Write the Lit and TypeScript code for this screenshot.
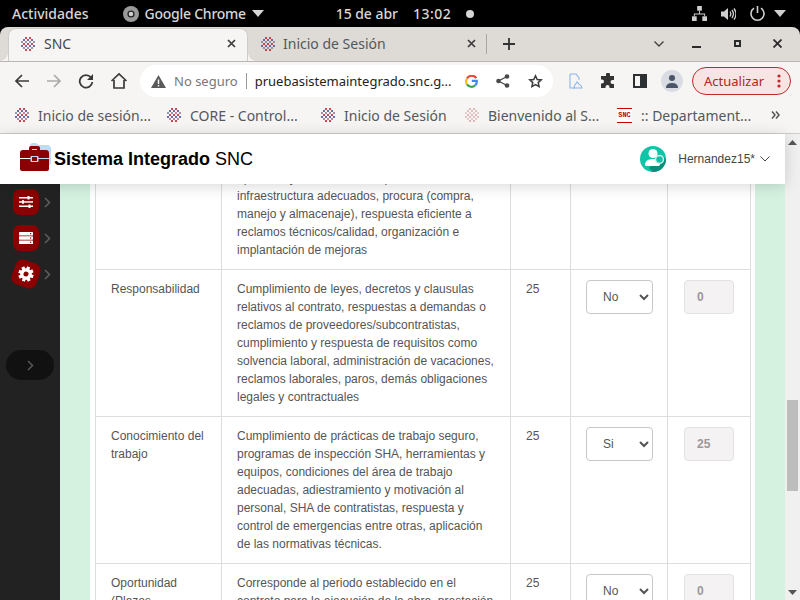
import { LitElement, css, html, svg } from "lit";
import { customElement } from "lit/decorators.js";

interface Row {
  name: string[];
  text: string[];
  answer: string;
  score: string;
}

const rows: Row[] = [
  {
    name: ["Responsabilidad"],
    text: [
      "Cumplimiento de leyes, decretos y clausulas",
      "relativos al contrato, respuestas a demandas o",
      "reclamos de proveedores/subcontratistas,",
      "cumplimiento y respuesta de requisitos como",
      "solvencia laboral, administración de vacaciones,",
      "reclamos laborales, paros, demás obligaciones",
      "legales y contractuales",
    ],
    answer: "No",
    score: "0",
  },
  {
    name: ["Conocimiento del", "trabajo"],
    text: [
      "Cumplimiento de prácticas de trabajo seguro,",
      "programas de inspección SHA, herramientas y",
      "equipos, condiciones del área de trabajo",
      "adecuadas, adiestramiento y motivación al",
      "personal, SHA de contratistas, respuesta y",
      "control de emergencias entre otras, aplicación",
      "de las normativas técnicas.",
    ],
    answer: "Si",
    score: "25",
  },
  {
    name: ["Oportunidad", "(Plazos"],
    text: [
      "Corresponde al periodo establecido en el",
      "contrato para la ejecución de la obra, prestación",
    ],
    answer: "No",
    score: "0",
  },
];

const favicon = (size = 16, pale = false) => {
  const dots: [number, number, string][] = [];
  const colours = pale
    ? ["#dfa8a8", "#d4b8b8", "#e0c4c4"]
    : ["#c0202e", "#4a4f96", "#8a7d9c"];
  for (let i = 0; i < 7; i++) {
    for (let j = 0; j < 7; j++) {
      if (Math.abs(i - 3) + Math.abs(j - 3) > 4 || (i + j) % 2) continue;
      dots.push([i * 2 + 2, j * 2 + 2, colours[(i * 3 + j) % 3]]);
    }
  }
  return html`<svg class="fav" width=${size} height=${size} viewBox="0 0 16 16">
    ${dots.map(([x, y, c]) => svg`<rect x=${x - 0.9} y=${y - 0.9} width="1.800" height="1.800" fill=${c}></rect>`)}
  </svg>`;
};

const chev = html`<svg class="side-chev" width="7" height="11" viewBox="0 0 7 11"><path d="M1 1l4.500 4.500L1 10" fill="none" stroke="#5c5c5c" stroke-width="1.600"/></svg>`;

@customElement("app-root")
export class AppRoot extends LitElement {
  static styles = css`
    :host {
      display: flex;
      flex-direction: column;
      width: 800px;
      height: 600px;
      overflow: hidden;
      font-family: "Noto Sans", sans-serif;
      background: #000;
    }
    .topbar {
      height: 27px;
      flex: none;
      background: #000;
      color: #d6d6d6;
      display: grid;
      grid-template-columns: 1fr auto 1fr;
      align-items: center;
      font-size: 14px;
      font-weight: 500;
      padding: 0 14px 0 12px;
    }
    .top-left,
    .top-right,
    .top-center {
      display: flex;
      align-items: center;
    }
    .top-left .app {
      display: flex;
      align-items: center;
      gap: 6px;
      margin-left: 34px;
      letter-spacing: -0.25px;
    }
    .top-center {
      margin-left: 12px;
    }
    .top-center .time {
      margin-left: 15px;
      margin-right: 15px;
      letter-spacing: 0.5px;
    }
    .top-center .date {
      letter-spacing: -0.05px;
    }
    .top-right {
      justify-content: flex-end;
      gap: 8px;
    }
    .tabstrip {
      height: 34px;
      flex: none;
      background: #dedbd6;
      border-radius: 8px 8px 0 0;
      display: flex;
      align-items: flex-end;
      padding-left: 8px;
      font-size: 14px;
      color: #45474a;
    }
    .tab {
      height: 33px;
      box-sizing: border-box;
      display: flex;
      align-items: center;
      padding: 0 12px 2px 12px;
      gap: 8px;
      flex: none;
      position: relative;
    }
    .tab.active {
      background: #f6f5f4;
      border-radius: 8px 8px 0 0;
      width: 240px;
      box-shadow: inset 0 1px 0 #d0cdc8, inset 1px 0 0 #d0cdc8, inset -1px 0 0 #d0cdc8;
    }
    .tab.active::before,
    .tab.active::after {
      content: "";
      position: absolute;
      bottom: 0;
      width: 8px;
      height: 8px;
    }
    .tab.active::before {
      left: -8px;
      background: radial-gradient(circle at 0 0, transparent 7.500px, #f6f5f4 8px);
    }
    .tab.active::after {
      right: -8px;
      background: radial-gradient(circle at 100% 0, transparent 7.500px, #f6f5f4 8px);
    }
    .tab .title {
      flex: 1;
    }
    .tab.other {
      width: 238px;
      gap: 7px;
      padding-right: 10px;
      color: #55575a;
    }
    .sep {
      width: 1px;
      height: 20px;
      background: #a9a7a3;
      margin-bottom: 7px;
    }
    .plus {
      margin: 0 0 11px 16px;
    }
    .win {
      margin-left: auto;
      display: flex;
      align-items: center;
      height: 33px;
      padding-bottom: 2px;
      box-sizing: border-box;
    }
    .win svg {
      display: block;
    }
    .win-chevron {
      margin-right: 28px;
    }
    .win-min {
      margin-right: 33px;
    }
    .win-max {
      margin-right: 32px;
    }
    .win-close {
      margin-right: 18px;
    }
    .toolbar {
      height: 37px;
      flex: none;
      background: #f6f5f4;
      border-top: 1px solid #b9b7b3;
      box-sizing: border-box;
      display: flex;
      align-items: center;
      padding: 2px 0 0 14px;
    }
    .nav {
      display: flex;
      align-items: center;
      gap: 16px;
      width: 126px;
      flex: none;
    }
    .omnibox {
      width: 413px;
      height: 32px;
      flex: none;
      background: #fff;
      border-radius: 16px;
      display: flex;
      align-items: center;
      box-sizing: border-box;
      padding-left: 11px;
      font-size: 13px;
      color: #777;
    }
    .omnibox .warn {
      margin-right: 8px;
    }
    .omnibox .divider {
      width: 1px;
      height: 16px;
      background: #999;
      margin: 0 8px;
    }
    .omnibox .url {
      color: #222;
      width: 197px;
      white-space: nowrap;
    }
    .omni-icons {
      display: flex;
      align-items: center;
      gap: 18px;
      margin-left: 13px;
    }
    .tools {
      display: flex;
      align-items: center;
      gap: 17px;
      margin-left: 16px;
    }
    .avatar {
      width: 22px;
      height: 22px;
      border-radius: 50%;
      background: #d9dde3;
      display: flex;
      align-items: center;
      justify-content: center;
      margin-left: -3px;
    }
    .update {
      margin-left: 9px;
      width: 99px;
      height: 28px;
      box-sizing: border-box;
      border: 1px solid #c2272d;
      border-radius: 14px;
      background: #f6e5e3;
      color: #b3261e;
      font-size: 13px;
      display: flex;
      align-items: center;
      padding: 0 9px 0 11px;
      justify-content: space-between;
    }
    .bookmarks {
      height: 36px;
      flex: none;
      box-sizing: border-box;
      background: #f6f5f4;
      border-bottom: 1px solid #cfcdca;
      display: flex;
      align-items: center;
      padding: 0 0 1px 14px;
      font-size: 14px;
      color: #55575a;
    }
    .bm {
      display: flex;
      align-items: center;
      gap: 8px;
      white-space: nowrap;
      flex: none;
    }
    .bm .fav {
      flex: none;
    }
    .bm-1 {
      width: 152px;
    }
    .bm-2 {
      width: 154px;
    }
    .bm-3 {
      width: 144px;
    }
    .bm-4 {
      width: 152px;
    }
    .snc-mark {
      width: 15px;
      height: 13px;
      margin: 0 1px;
      border-top: 1px solid #c00;
      border-bottom: 1px solid #c00;
      color: #c00;
      font: 700 7px/13px "Liberation Mono", monospace;
      text-align: center;
      background: #fff;
      flex: none;
    }
    .bm-more {
      margin-left: auto;
      margin-right: 20px;
    }
    .page {
      flex: 1;
      min-height: 0;
      display: flex;
      font-family: "Liberation Sans", Arial, sans-serif;
    }
    .main {
      flex: 1;
      min-width: 0;
      display: flex;
      flex-direction: column;
    }
    .head {
      height: 50px;
      flex: none;
      background: #fff;
      display: flex;
      align-items: center;
      padding: 0 15px 0 20px;
      box-shadow: 0 2px 14px rgba(0, 0, 0, 0.16);
      position: relative;
      z-index: 2;
    }
    .logo {
      margin-bottom: 4px;
      flex: none;
    }
    .brand {
      font-size: 18px;
      color: #000;
      margin-left: 3px;
      white-space: nowrap;
    }
    .brand b {
      font-weight: 700;
    }
    .user {
      margin-left: auto;
      display: flex;
      align-items: center;
      font-size: 12px;
      color: #444;
    }
    .user .name {
      margin-left: 12px;
      margin-right: 5px;
    }
    .body {
      flex: 1;
      min-height: 0;
      display: flex;
      overflow: hidden;
    }
    .side {
      width: 60px;
      flex: none;
      background: #222;
      padding: 5px 0 0 13px;
      box-sizing: border-box;
      display: flex;
      flex-direction: column;
    }
    .side-item {
      display: flex;
      align-items: center;
      gap: 5px;
      height: 26px;
      margin-bottom: 10px;
    }
    .badge {
      width: 26px;
      height: 26px;
      border-radius: 7px;
      background: #8b0000;
      display: flex;
      align-items: center;
      justify-content: center;
      flex: none;
    }
    .badge.tilt {
      transform: rotate(20deg);
    }
    .toggle {
      margin: 53px 0 0 -7px;
      width: 48px;
      height: 30px;
      border-radius: 15px;
      background: #111;
      display: flex;
      align-items: center;
      justify-content: center;
    }
    .content {
      flex: 1;
      min-width: 0;
      background: #d5f2e0;
      padding: 0 30px;
    }
    .sheet {
      background: #fff;
      height: 100%;
      padding: 0 5px;
      overflow: hidden;
    }
    table {
      border-collapse: collapse;
      table-layout: fixed;
      width: 655px;
      font-size: 12px;
      line-height: 18px;
      color: #555;
      margin-top: -26px;
    }
    td {
      border: 1px solid #ddd;
      padding: 10px 15px;
      vertical-align: top;
    }
    .c1 {
      width: 126px;
    }
    .c2 {
      width: 289px;
    }
    .c3 {
      width: 60px;
    }
    .c4 {
      width: 97px;
    }
    .c5 {
      width: 83px;
    }
    select {
      width: 67px;
      height: 34px;
      box-sizing: border-box;
      border: 1px solid #c8c8c8;
      border-radius: 4px;
      background: #fff;
      color: #555;
      font: 12px "Liberation Sans", Arial, sans-serif;
      padding: 0 0 0 12px;
      display: block;
    }
    input {
      width: 50px;
      height: 34px;
      box-sizing: border-box;
      margin-left: 1px;
      border: 1px solid #e2e2e2;
      border-radius: 4px;
      background: #f4f2f2;
      color: #999;
      font: 700 12px "Liberation Sans", Arial, sans-serif;
      padding: 0 12px;
      display: block;
    }
    .scrollbar {
      width: 15px;
      flex: none;
      background: #f0f0f0;
      display: flex;
      flex-direction: column;
      align-items: center;
      padding-top: 6px;
      box-sizing: border-box;
    }
    .thumb {
      width: 11px;
      height: 91px;
      background: #bdbdbd;
      margin-top: 255px;
    }
    .arrow-down {
      margin-top: auto;
      margin-bottom: 5px;
    }
  `;

  private renderTopbar() {
    return html`<div class="topbar">
      <div class="top-left">
        <span>Actividades</span>
        <span class="app">
          <svg width="16" height="16" viewBox="0 0 16 16"><circle cx="8" cy="8" r="8" fill="#9a9a9a"/><circle cx="8" cy="8" r="3.600" fill="#222"/><circle cx="8" cy="8" r="2.300" fill="#cfcfcf"/></svg>
          Google Chrome
          <svg width="12" height="7" viewBox="0 0 12 7"><path d="M0 0h12L6 7z" fill="#d6d6d6"/></svg>
        </span>
      </div>
      <div class="top-center">
        <span class="date">15 de abr</span>
        <span class="time">13:02</span>
        <svg width="8" height="8" viewBox="0 0 8 8"><circle cx="4" cy="4" r="4" fill="#d6d6d6"/></svg>
      </div>
      <div class="top-right">
        <svg width="15" height="15" viewBox="0 0 16 16" fill="#cfcfcf"><rect x="5.500" y="0" width="5" height="5"/><rect x="0" y="11" width="5" height="5"/><rect x="11" y="11" width="5" height="5"/><path d="M7.500 5h1v3H14v3h-1V9H3v2H2V8h5.500z"/></svg>
        <svg width="16" height="16" viewBox="0 0 16 16" fill="none" stroke="#cfcfcf" style="margin-left:5px"><path d="M1 5.500h3L8 2v12L4 10.500H1z" fill="#cfcfcf" stroke="none"/><path d="M10 5.500c1 1.500 1 3.500 0 5M12 4c1.700 2.400 1.700 5.600 0 8M14 2.500c2.400 3.300 2.400 7.700 0 11" stroke-width="1.300"/></svg>
        <svg width="17" height="17" viewBox="0 0 17 17" fill="none" stroke="#cfcfcf" stroke-width="1.600" style="margin-left:5px"><path d="M8.500 1v7M5 3.200a6.500 6.500 0 1 0 7 0"/></svg>
        <svg width="12" height="7" viewBox="0 0 12 7"><path d="M0 0h12L6 7z" fill="#cfcfcf"/></svg>
      </div>
    </div>`;
  }

  private x(colour = "#3c3c3c") {
    return html`<svg class="x" width="9" height="9" viewBox="0 0 9 9"><path d="M1 1l7 7M8 1L1 8" stroke=${colour} stroke-width="1.700" fill="none"/></svg>`;
  }

  private renderTabs() {
    return html`<div class="tabstrip">
      <div class="tab active">${favicon()}<span class="title">SNC</span>${this.x()}</div>
      <div class="tab other">${favicon()}<span class="title">Inicio de Sesión</span>${this.x()}</div>
      <div class="sep"></div>
      <svg class="plus" width="12" height="12" viewBox="0 0 12 12"><path d="M6 0v12M0 6h12" stroke="#333" stroke-width="1.800"/></svg>
      <div class="win">
        <svg class="win-chevron" width="10" height="6" viewBox="0 0 10 6"><path d="M.5.500L5 5 9.500.500" stroke="#444" stroke-width="1.400" fill="none"/></svg>
        <svg class="win-min" width="9" height="9" viewBox="0 0 9 9"><path d="M0 8h9" stroke="#2b2b2b" stroke-width="2"/></svg>
        <svg class="win-max" width="7" height="7" viewBox="0 0 7 7"><rect x="1" y="1" width="5" height="5" stroke="#2b2b2b" stroke-width="2" fill="none"/></svg>
        <svg class="win-close" width="9" height="9" viewBox="0 0 9 9"><path d="M.5.500l8 8M8.500.500l-8 8" stroke="#2b2b2b" stroke-width="1.800"/></svg>
      </div>
    </div>`;
  }

  private renderToolbar() {
    return html`<div class="toolbar">
      <div class="nav">
        <svg width="16" height="16" viewBox="0 0 16 16" fill="none" stroke="#3a3a3a" stroke-width="1.700"><path d="M15 8H2M8 2L2 8l6 6"/></svg>
        <svg width="16" height="16" viewBox="0 0 16 16" fill="none" stroke="#aaa" stroke-width="1.700"><path d="M1 8h13M8 2l6 6-6 6"/></svg>
        <svg width="16" height="16" viewBox="0 0 16 16" fill="none" stroke="#3a3a3a" stroke-width="1.800"><path d="M13 4.500A6.300 6.300 0 1 0 14.300 9"/><path d="M15 1v6H9z" stroke="none" fill="#3a3a3a"/></svg>
        <svg width="18" height="18" viewBox="0 0 18 18" fill="none" stroke="#3a3a3a" stroke-width="1.700"><path d="M1.500 9L9 2l7.500 7M4 8v8h10V8"/></svg>
      </div>
      <div class="omnibox">
        <svg class="warn" width="15" height="13" viewBox="0 0 15 13"><path d="M7.500 0L15 13H0z" fill="#5a5a5a"/><rect x="6.800" y="4.500" width="1.400" height="4.500" fill="#fff"/><rect x="6.800" y="10" width="1.400" height="1.400" fill="#fff"/></svg>
        <span>No seguro</span>
        <span class="divider"></span>
        <span class="url">pruebasistemaintegrado.snc.g...</span>
        <span class="omni-icons">
          <svg width="13" height="13" viewBox="0 0 13 13" fill="none" stroke-width="2.200"><path d="M11.300 3.200A5.400 5.400 0 0 0 2 3.600" stroke="#ea4335"/><path d="M2 3.600a5.400 5.400 0 0 0 0 5.800" stroke="#fbbc05"/><path d="M2 9.400a5.400 5.400 0 0 0 8.300 .8" stroke="#34a853"/><path d="M10.300 10.200a5.400 5.400 0 0 0 1.500-4.400H6.800" stroke="#4285f4"/></svg>
          <svg width="14" height="14" viewBox="0 0 14 14" fill="#4a4a4a"><circle cx="11" cy="2.500" r="2.300"/><circle cx="11" cy="11.500" r="2.300"/><circle cx="2.500" cy="7" r="2.300"/><path d="M11 2.500L2.500 7l8.500 4.500" fill="none" stroke="#4a4a4a" stroke-width="1.300"/></svg>
          <svg width="15" height="15" viewBox="0 0 15 15" fill="none" stroke="#3a3a3a" stroke-width="1.500"><path d="M7.500 1.800l1.700 3.700 4 .4-3 2.700.9 4-3.600-2.100-3.600 2.100.9-4-3-2.700 4-.4z"/></svg>
        </span>
      </div>
      <div class="tools">
        <svg width="14" height="17" viewBox="0 0 14 17" fill="none" stroke="#8ab4e8" stroke-width="1.100"><path d="M1 1h6l3 4v2M1 1v14h5"/><path d="M5 15c0-3 2-4 3-6 1 2 5 3 5 6z"/></svg>
        <svg width="16" height="16" viewBox="0 0 16 16" fill="#333"><path d="M6 1.500a2 2 0 0 1 4 0V3h4v4h-1.500a2 2 0 0 0 0 4H14v4H9.500v-1a2 2 0 0 0-4 0v1H1v-4.500h1a2 2 0 0 0 0-4H1V3h5z"/></svg>
        <svg width="14" height="14" viewBox="0 0 14 14"><rect x="1" y="1" width="12" height="12" fill="#f6f5f4" stroke="#2d3033" stroke-width="2"/><rect x="7" y="1" width="6" height="12" fill="#2d3033"/></svg>
        <span class="avatar"><svg width="14" height="14" viewBox="0 0 14 14" fill="#4a5568"><circle cx="7" cy="4" r="3"/><path d="M1 14c0-4 3-5 6-5s6 1 6 5z"/></svg></span>
      </div>
      <div class="update">
        <span>Actualizar</span>
        <svg width="4" height="14" viewBox="0 0 4 14" fill="#c2272d"><circle cx="2" cy="2" r="1.600"/><circle cx="2" cy="7" r="1.600"/><circle cx="2" cy="12" r="1.600"/></svg>
      </div>
    </div>`;
  }

  private renderBookmarks() {
    return html`<div class="bookmarks">
      <span class="bm bm-1">${favicon(16)}Inicio de sesión...</span>
      <span class="bm bm-2">${favicon(16)}CORE - Control...</span>
      <span class="bm bm-3">${favicon(16)}Inicio de Sesión</span>
      <span class="bm bm-4">${favicon(16, true)}Bienvenido al S...</span>
      <span class="bm"><span class="snc-mark">SNC</span>:: Departament...</span>
      <svg class="bm-more" width="9" height="8" viewBox="0 0 9 8" fill="none" stroke="#555" stroke-width="1.500"><path d="M1 .500L4 4 1 7.500M5 .500L8 4 5 7.500"/></svg>
    </div>`;
  }

  private renderHead() {
    return html`<div class="head">
      <svg class="logo" width="31" height="28" viewBox="0 0 31 28">
        <path d="M10 3a3 3 0 0 1 3-3h3l3 2h8a4 4 0 0 1 4 4v13a4 4 0 0 1-4 4H10z" fill="#bcdcfb"/>
        <path d="M9 8V5a2 2 0 0 1 2-2h7a2 2 0 0 1 2 2v3h-3V6h-5v2z" fill="#8b0000"/>
        <path d="M0 10a3 3 0 0 1 3-3h23a3 3 0 0 1 3 3v5H0z" fill="#8b0000"/>
        <path d="M0 16h29v10a2 2 0 0 1-2 2H2a2 2 0 0 1-2-2z" fill="#8b0000"/>
        <rect x="10.500" y="13" width="8" height="6" rx="1" fill="#bcdcfb"/>
        <rect x="12" y="14" width="5" height="4" fill="#8b0000"/>
      </svg>
      <span class="brand"><b>Sistema Integrado</b> SNC</span>
      <div class="user">
        <svg width="26" height="26" viewBox="0 0 26 26">
          <circle cx="13" cy="13" r="13" fill="#10c4a8"/>
          <path d="M13 26a13 13 0 0 0 13-13l-5-3-12 12z" fill="#0a8f7d"/>
          <circle cx="13" cy="7.500" r="4.500" fill="#fff"/>
          <path d="M5 19c0-4 3-6 8-6s7 2 7 6a2 2 0 0 1-2 1H7a2 2 0 0 1-2-1z" fill="#fff"/>
          <circle cx="19.500" cy="13.500" r="4" fill="#10c4a8" stroke="#d5f2ec" stroke-width="1.500"/>
        </svg>
        <span class="name">Hernandez15*</span>
        <svg width="10" height="6" viewBox="0 0 10 6" fill="none" stroke="#444"><path d="M.5.500L5 5 9.500.500"/></svg>
      </div>
    </div>`;
  }

  private renderSide() {
    return html`<nav class="side">
      <div class="side-item">
        <span class="badge"><svg width="14" height="12" viewBox="0 0 14 12" fill="#fff"><rect y="1" width="14" height="1.500"/><rect y="5.200" width="14" height="1.500"/><rect y="9.500" width="14" height="1.500"/><rect x="8.500" y="0" width="2" height="3.500"/><rect x="3" y="4.200" width="2" height="3.500"/><rect x="9.500" y="8.500" width="2" height="3.500"/></svg></span>
        ${chev}
      </div>
      <div class="side-item">
        <span class="badge"><svg width="14" height="12" viewBox="0 0 14 12" fill="#fff"><rect width="14" height="3.400" rx=".6"/><rect y="4.300" width="14" height="3.400" rx=".6"/><rect y="8.600" width="14" height="3.400" rx=".6"/><rect x="11" y="1" width="1.200" height="1.200" fill="#8b0000"/><rect x="11" y="5.400" width="1.200" height="1.200" fill="#8b0000"/><rect x="11" y="9.700" width="1.200" height="1.200" fill="#8b0000"/></svg></span>
        ${chev}
      </div>
      <div class="side-item">
        <span class="badge tilt"><svg width="16" height="16" viewBox="0 0 16 16"><g fill="#fff">${[0, 45, 90, 135].map((a) => svg`<rect x="6.400" y="0.300" width="3.200" height="15.400" transform="rotate(${a} 8 8)"></rect>`)}<circle cx="8" cy="8" r="5.800"/></g><circle cx="8" cy="8" r="2.500" fill="#8b0000"/></svg></span>
        ${chev}
      </div>
      <div class="toggle"><svg width="7" height="11" viewBox="0 0 7 11"><path d="M1 1l4.500 4.500L1 10" fill="none" stroke="#555" stroke-width="1.600"/></svg></div>
    </nav>`;
  }

  private renderRow(row: Row) {
    return html`<tr>
      <td>${row.name.map((l) => html`${l}<br />`)}</td>
      <td>${row.text.map((l) => html`${l}<br />`)}</td>
      <td>25</td>
      <td>
        <select>
          <option ?selected=${row.answer === "Si"}>Si</option>
          <option ?selected=${row.answer === "No"}>No</option>
        </select>
      </td>
      <td><input disabled .value=${row.score} /></td>
    </tr>`;
  }

  render() {
    return html`
      ${this.renderTopbar()} ${this.renderTabs()} ${this.renderToolbar()} ${this.renderBookmarks()}
      <div class="page">
        <div class="main">
          ${this.renderHead()}
          <div class="body">
            ${this.renderSide()}
            <div class="content">
              <div class="sheet">
                <table>
                  <colgroup>
                    <col class="c1" />
                    <col class="c2" />
                    <col class="c3" />
                    <col class="c4" />
                    <col class="c5" />
                  </colgroup>
                  <tr>
                    <td></td>
                    <td>
                      operativo y mantenimiento, personal<br />
                      infraestructura adecuados, procura (compra,<br />
                      manejo y almacenaje), respuesta eficiente a<br />
                      reclamos técnicos/calidad, organización e<br />
                      implantación de mejoras
                    </td>
                    <td></td>
                    <td></td>
                    <td></td>
                  </tr>
                  ${rows.map((r) => this.renderRow(r))}
                </table>
              </div>
            </div>
          </div>
        </div>
        <div class="scrollbar">
          <svg width="9" height="5" viewBox="0 0 9 5"><path d="M0 5h9L4.500 0z" fill="#555"/></svg>
          <div class="thumb"></div>
          <svg class="arrow-down" width="9" height="5" viewBox="0 0 9 5"><path d="M0 0h9L4.500 5z" fill="#555"/></svg>
        </div>
      </div>
    `;
  }
}
